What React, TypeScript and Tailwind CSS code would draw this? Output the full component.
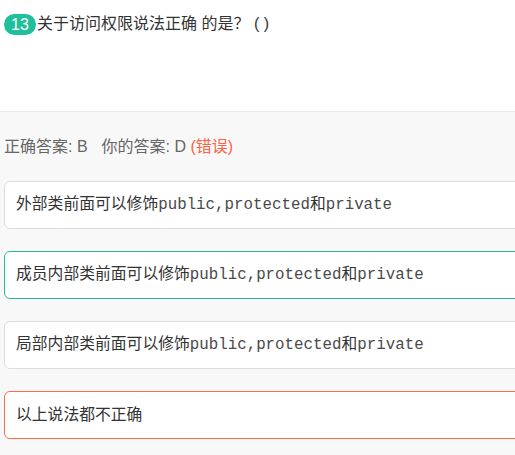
const OPTIONS = [
    {id: "A", text: "外部类前面可以修饰", code: true, state: "normal"},
    {id: "B", text: "成员内部类前面可以修饰", code: true, state: "correct"},
    {id: "C", text: "局部内部类前面可以修饰", code: true, state: "normal"},
    {id: "D", text: "以上说法都不正确", code: false, state: "wrong"},
];

const sans = "font-['Liberation_Sans','Noto_Sans_CJK_SC',sans-serif]";
const mono = "font-['Liberation_Mono','Noto_Sans_CJK_SC',monospace]";

function Option({text, code, state}: { text: string; code: boolean; state: string }) {
    const border =
        state === "correct" ? "border-[#1fbf9b]" : state === "wrong" ? "border-[#ff6a4f]" : "border-[#dcdcdc]";
    return (
        <div className={`mr-[-24px] h-[48px] rounded-[6px] border bg-white pl-[11px] flex items-center ${border}`}>
            <span className="text-[15.8px] text-[#333]">
                {text}
                {code && (
                    <>
                        <span className={`${mono} text-[#4a4a4a]`}>public,protected</span>
                        和
                        <span className={`${mono} text-[#4a4a4a]`}>private</span>
                    </>
                )}
            </span>
        </div>
    );
}

export default function App() {
    return (
        <main className={`${sans} w-[515px] h-[455px] overflow-hidden bg-[#f8f8f8]`}>
            {/* Question */}
            <section className="h-[112px] bg-white border-b border-[#ececec] pt-[12px] pl-[4px]">
                <div className="flex items-center">
                    <span className="h-[21px] w-[32px] rounded-full bg-[#1fbf9b] text-white text-[16px] leading-[21px] text-center">
                        13
                    </span>
                    <span className="ml-[1px] text-[16px] text-[#333]">关于访问权限说法正确 的是？ ( )</span>
                </div>
            </section>

            {/* Answer */}
            <section className="px-[4px]">
                <p className="mt-[24px] h-[22px] leading-[22px] text-[16px] text-[#666]">
                    正确答案: B<span className="ml-[14px]">你的答案: D</span>{" "}
                    <span className="text-[#ff6245]">(错误)</span>
                </p>
                <div className="mt-[23px] flex flex-col gap-[22px]">
                    {OPTIONS.map((o) => (
                        <Option key={o.id} text={o.text} code={o.code} state={o.state}/>
                    ))}
                </div>
            </section>
        </main>
    );
}
